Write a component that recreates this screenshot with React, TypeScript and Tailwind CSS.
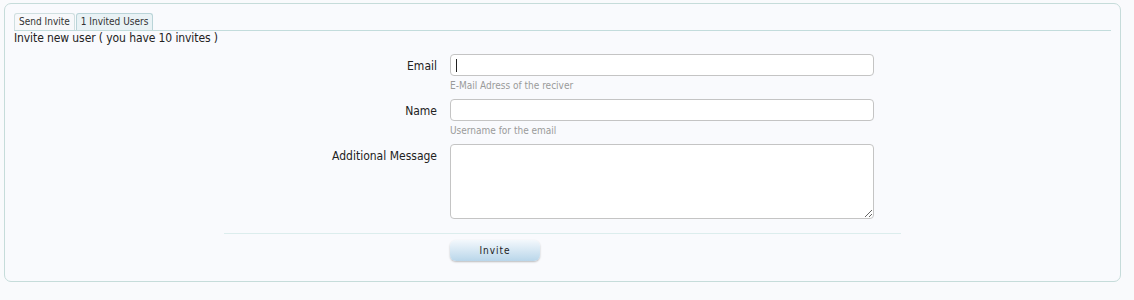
const App = () => {
  const fields = [
    { label: "Email", hint: "E-Mail Adress of the reciver", caret: true },
    { label: "Name", hint: "Username for the email", caret: false },
  ];

  return (
    <div className="w-[1134px] h-[300px] bg-[#f9fafc] pt-[3px] pl-[4px] font-['DejaVu_Sans_Condensed','DejaVu_Sans',sans-serif] text-[#222]">
      <div className="w-[1117px] h-[279px] rounded-[7px] border border-[#c6dcda] bg-[#f9fafd] px-[9px] pt-[10px]">
        {/* Tabs */}
        <div className="flex items-end border-b border-[#c3dcdc] h-[17px]">
          <div className="h-[17px] px-[4px] leading-[16px] text-[10px] text-[#333] border border-b-0 border-[#cfdfe0] bg-[#f7f8fa] rounded-t-[3px]">
            Send Invite
          </div>
          <div className="h-[17px] px-[4px] leading-[16px] text-[10px] text-[#333] border border-b-0 border-[#b9d4d8] bg-[#e9f2f5] rounded-t-[3px] ml-px">
            1 Invited Users
          </div>
        </div>
        <div className="text-[12px] leading-[15px] tracking-[-0.1px]">Invite new user ( you have 10 invites )</div>

        {/* Form */}
        <div className="mt-[8px]">
          {fields.map((f) => (
            <div key={f.label} className="flex mb-[3px]">
              <div className="w-[436px] text-right pr-[13px] text-[12px] leading-[24px]">{f.label}</div>
              <div>
                <div className="w-[424px] h-[22px] bg-white border border-[#c4c4c4] rounded-[4px] flex items-center pl-[5px]">
                  {f.caret && <div className="w-px h-[13px] bg-[#222]" />}
                </div>
                <div className="text-[10px] text-[#9a9a9a] leading-[12px] mt-[4px] h-[16px]">{f.hint}</div>
              </div>
            </div>
          ))}
          <div className="flex">
            <div className="w-[436px] text-right pr-[13px] text-[12px] leading-[24px]">Additional Message</div>
            <textarea className="w-[424px] h-[75px] bg-white border border-[#c4c4c4] rounded-[4px]" />
          </div>
          <div className="ml-[210px] w-[677px] border-t border-[#dceded] mt-[14px]" />
          <div className="pl-[436px] pt-[3px]">
            <button className="w-[90px] h-[21px] rounded-[6px] text-[10px] tracking-[1px] text-[#222] bg-gradient-to-b from-[#f3f8fc] to-[#b9d6ea] shadow-[0_1px_2px_rgba(0,0,0,0.25)]">
              Invite
            </button>
          </div>
        </div>
      </div>
    </div>
  );
};

export default App;
